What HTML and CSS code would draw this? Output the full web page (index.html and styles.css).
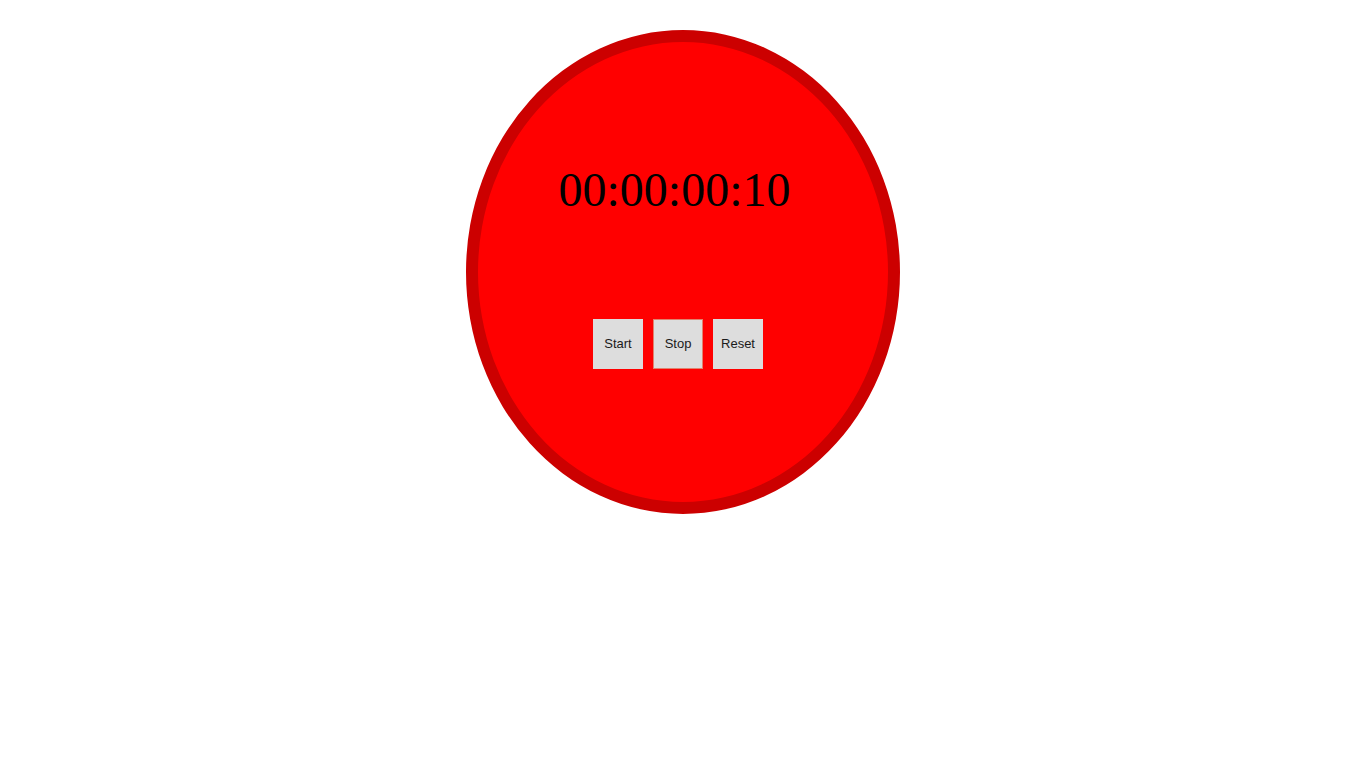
FILE: index.html
```html
<!DOCTYPE html>
<html>
<head>
<meta charset="utf-8">
<link rel="stylesheet" href="styles.css">
</head>
<body>
<div class="clock">
  <div class="time">00:00:00:10</div>
  <div class="controls">
    <button class="btn">Start</button>
    <button class="btn btn-focus">Stop</button>
    <button class="btn">Reset</button>
  </div>
</div>
</body>
</html>
```
FILE: styles.css
```css
html, body {
  margin: 0;
  padding: 0;
  background: #fff;
}
.clock {
  box-sizing: content-box;
  width: 410px;
  height: 460px;
  margin: 30px auto 0;
  border: 12px solid #cc0000;
  border-radius: 50%;
  background: #ff0000;
  display: flex;
  flex-direction: column;
  align-items: center;
}
.time {
  margin-top: 121px;
  margin-right: 17px;
  font-family: "Liberation Serif", "Times New Roman", serif;
  font-size: 48px;
  line-height: 53px;
  color: #000;
}
.controls {
  margin-top: 103px;
  margin-right: 10px;
  display: flex;
  gap: 10px;
}
.btn {
  width: 50px;
  height: 50px;
  padding: 0 0 2px;
  border: 1px solid #dddddd;
  background: #dddddd;
  font-family: "Liberation Sans", Arial, sans-serif;
  font-size: 13px;
  color: #1a1a1a;
}
.btn-focus {
  border-color: #e0836f;
}
```
